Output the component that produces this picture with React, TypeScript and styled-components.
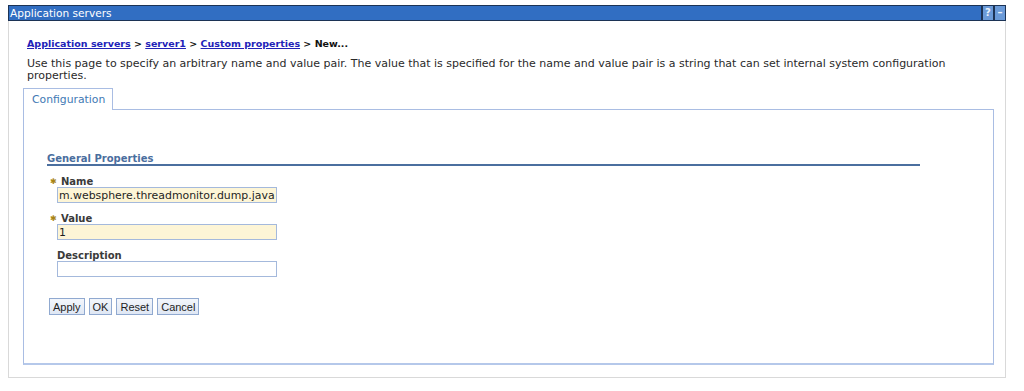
import React from "react";
import styled, { createGlobalStyle } from "styled-components";

const GlobalStyle = createGlobalStyle`
  html, body {
    margin: 0;
    padding: 0;
    background: #ffffff;
  }
  body {
    font-family: "DejaVu Sans", Verdana, sans-serif;
  }
`;

const Page = styled.div`
  width: 1024px;
  height: 391px;
  padding: 5px 0 0 8px;
  box-sizing: border-box;
`;

const Portlet = styled.div`
  width: 998px;
`;

const TitleBar = styled.div`
  height: 16px;
  box-sizing: border-box;
  display: flex;
  align-items: stretch;
  background: #316ec2;
  border: 1px solid #1c3355;
`;

const TitleText = styled.div`
  flex: 1;
  display: flex;
  align-items: center;
  padding-left: 1px;
  color: #ffffff;
  font-size: 10.6px;
`;

const TitleButton = styled.div`
  width: 10px;
  display: flex;
  align-items: center;
  justify-content: center;
  background: #6a9ad8;
  border-left: 2px solid #1c3355;
  color: #eaf1fb;
  font-size: 10px;
  font-weight: bold;
  line-height: 1;
  &:first-of-type {
    border-left: none;
  }
`;

const Body = styled.div`
  border: 1px solid #d9d9d9;
  border-top: none;
  padding: 15px 11px 12px 14px;
`;

const Breadcrumb = styled.div`
  padding-left: 4px;
  font-size: 9.5px;
  font-weight: bold;
  color: #111111;
  line-height: 16px;
`;

const Crumb = styled.a`
  color: #2222b8;
  text-decoration: underline;
`;

const Intro = styled.p`
  margin: 6px 0 0 0;
  padding: 0 24px 0 4px;
  font-size: 11px;
  line-height: 12px;
  color: #2a2a2a;
`;

const Tabs = styled.div`
  margin-top: 6px;
  display: flex;
`;

const Tab = styled.div`
  width: 90px;
  height: 22px;
  box-sizing: border-box;
  border: 1px solid #a9bde3;
  border-bottom: none;
  display: flex;
  align-items: center;
  padding-left: 8px;
  font-size: 10.8px;
  color: #4179b4;
  background: #ffffff;
  position: relative;
  z-index: 1;
`;

const Panel = styled.div`
  height: 256px;
  box-sizing: border-box;
  margin-top: -1px;
  border: 1px solid #a9bde3;
  border-bottom: 2px solid #b5c8ea;
  padding: 43px 0 0 23px;
`;

const Section = styled.div`
  width: 873px;
`;

const SectionTitle = styled.div`
  font-size: 10px;
  font-weight: bold;
  color: #4a6e9e;
  line-height: 11px;
  border-bottom: 2px solid #4b6f9f;
`;

const Field = styled.div<{ $top: number }>`
  margin-top: ${(p) => p.$top}px;
  padding-left: 3px;
`;

const Label = styled.div`
  display: flex;
  align-items: center;
  height: 11px;
  font-size: 10px;
  font-weight: bold;
  color: #3a3a3a;
`;

const Star = styled.span`
  width: 11px;
  color: #a88414;
  font-size: 8px;
  line-height: 1;
`;

const Indent = styled.span<{ $w: number }>`
  width: ${(p) => p.$w}px;
`;

const TextBox = styled.input<{ $required?: boolean }>`
  display: block;
  margin: 0 0 0 7px;
  width: 220px;
  height: 16px;
  box-sizing: border-box;
  padding: 0 1px;
  border: 1px solid #a4b9dc;
  background: ${(p) => (p.$required ? "#fdf5d6" : "#ffffff")};
  font-family: "DejaVu Sans", Verdana, sans-serif;
  font-size: 10.9px;
  color: #1e1e1e;
  outline: none;
`;

const Buttons = styled.div`
  margin-top: 21px;
  margin-left: 2px;
  display: flex;
  gap: 4px;
`;

const Button = styled.button`
  height: 17px;
  box-sizing: border-box;
  padding: 0 3px;
  border: 1px solid #90a9d0;
  background: linear-gradient(#f3f6fb, #dfe7f4);
  font-family: "Liberation Sans", Arial, sans-serif;
  font-size: 11px;
  color: #1e1e1e;
  line-height: 14px;
`;

const App: React.FC = () => {
  return (
    <Page>
      <GlobalStyle />
      <Portlet>
        <TitleBar>
          <TitleText>Application servers</TitleText>
          <TitleButton>?</TitleButton>
          <TitleButton>–</TitleButton>
        </TitleBar>
        <Body>
          <Breadcrumb>
            <Crumb>Application servers</Crumb> &gt; <Crumb>server1</Crumb> &gt;{" "}
            <Crumb>Custom properties</Crumb> &gt; New...
          </Breadcrumb>
          <Intro>
            Use this page to specify an arbitrary name and value pair. The value that is specified
            for the name and value pair is a string that can set internal system configuration
            properties.
          </Intro>
          <Tabs>
            <Tab>Configuration</Tab>
          </Tabs>
          <Panel>
            <Section>
              <SectionTitle>General Properties</SectionTitle>
              <Field $top={10}>
                <Label>
                  <Star>✱</Star>
                  Name
                </Label>
                <TextBox $required defaultValue="m.websphere.threadmonitor.dump.java" />
              </Field>
              <Field $top={10}>
                <Label>
                  <Star>✱</Star>
                  Value
                </Label>
                <TextBox $required defaultValue="1" />
              </Field>
              <Field $top={10}>
                <Label>
                  <Indent $w={7} />
                  Description
                </Label>
                <TextBox />
              </Field>
              <Buttons>
                <Button>Apply</Button>
                <Button>OK</Button>
                <Button>Reset</Button>
                <Button>Cancel</Button>
              </Buttons>
            </Section>
          </Panel>
        </Body>
      </Portlet>
    </Page>
  );
};

export default App;
